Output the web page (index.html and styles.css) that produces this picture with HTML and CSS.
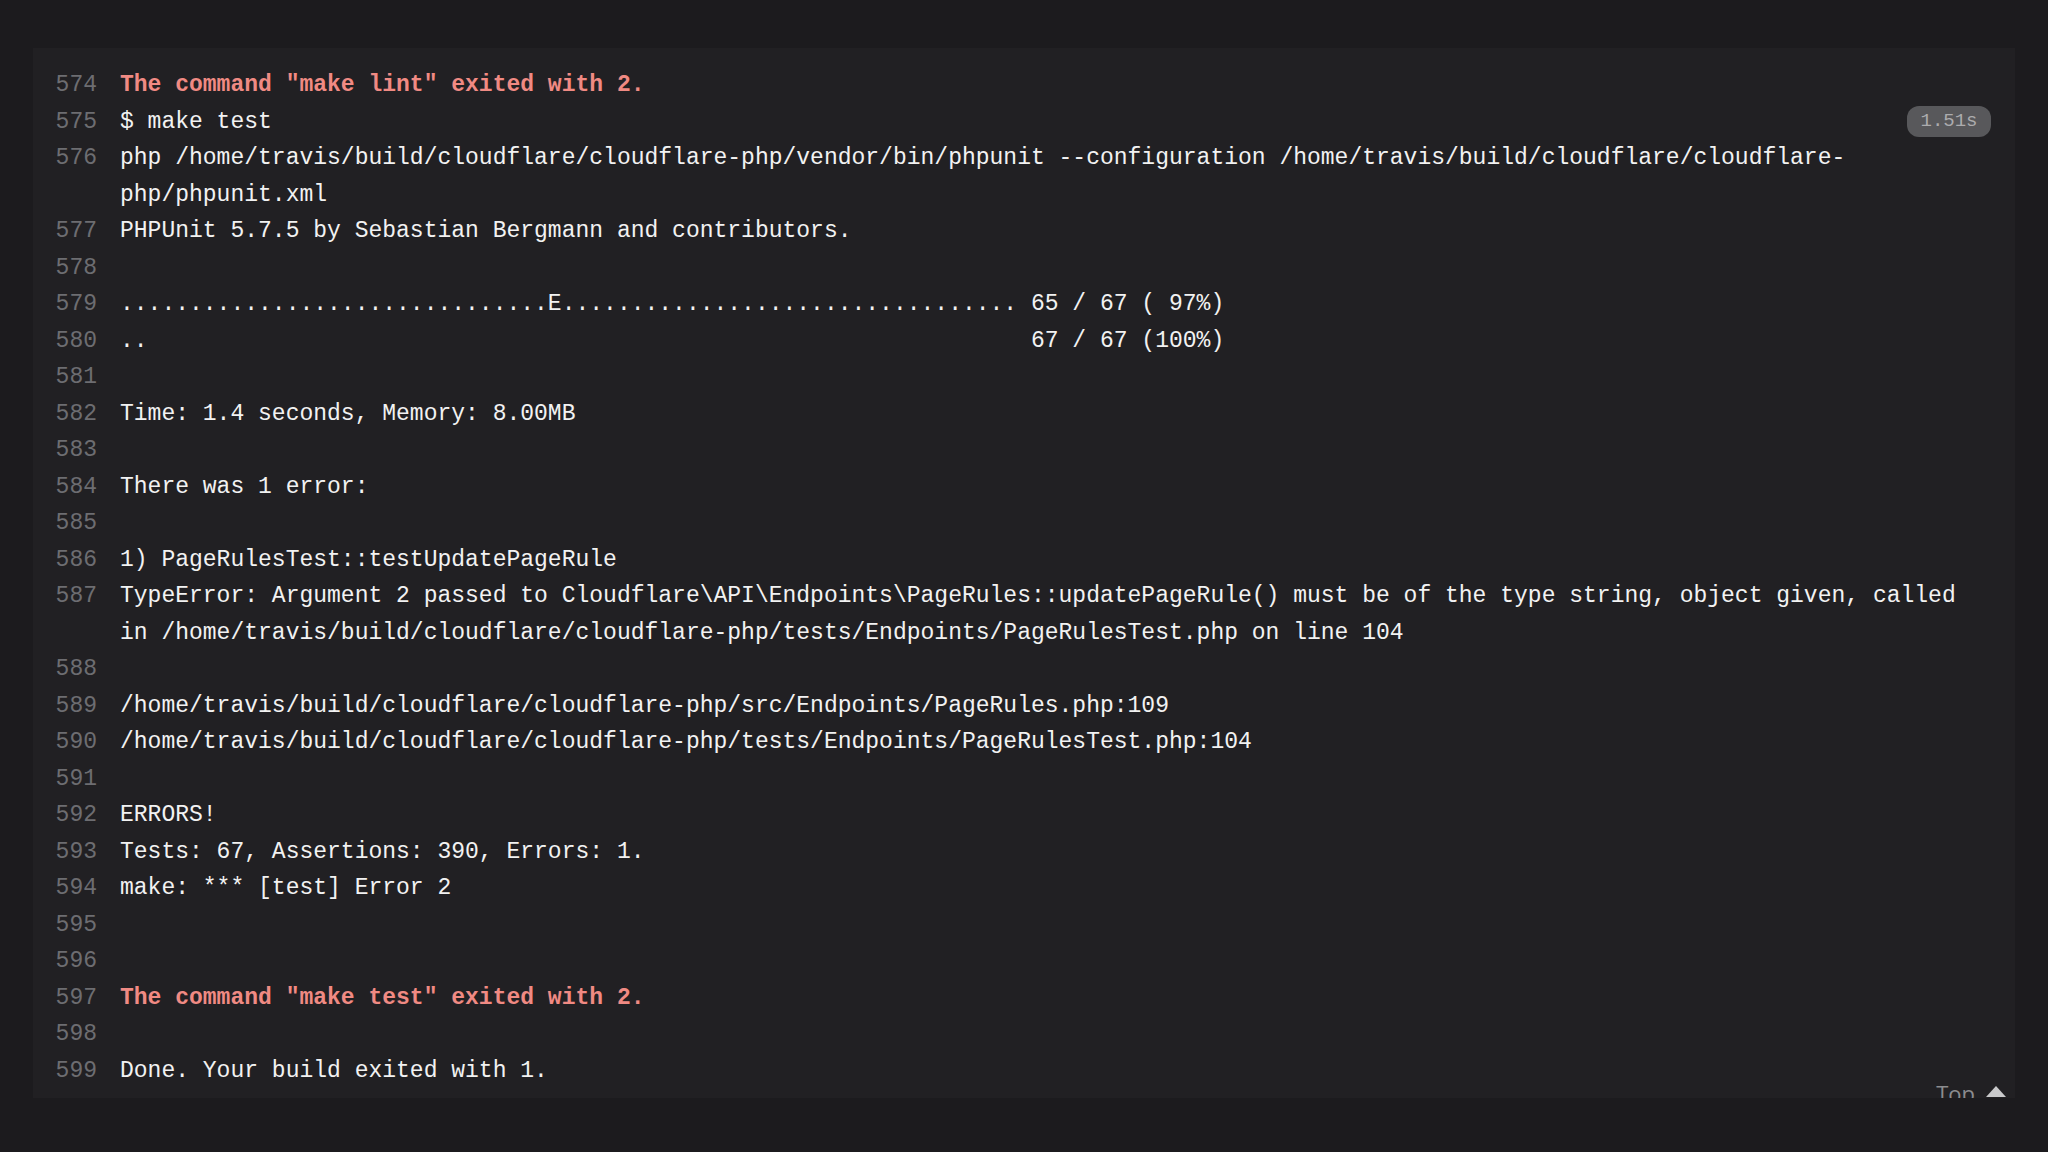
FILE: index.html
```html
<!DOCTYPE html>
<html>
<head>
<meta charset="utf-8">
<link rel="stylesheet" href="styles.css">
</head>
<body>
<div class="log">
  <span class="badge">1.51s</span>
  <div class="row err"><span class="num">574</span><span class="txt">The command "make lint" exited with 2.</span></div>
  <div class="row"><span class="num">575</span><span class="txt">$ make test</span></div>
  <div class="row"><span class="num">576</span><span class="txt">php /home/travis/build/cloudflare/cloudflare-php/vendor/bin/phpunit --configuration /home/travis/build/cloudflare/cloudflare-php/phpunit.xml</span></div>
  <div class="row"><span class="num">577</span><span class="txt">PHPUnit 5.7.5 by Sebastian Bergmann and contributors.</span></div>
  <div class="row"><span class="num">578</span><span class="txt"></span></div>
  <div class="row"><span class="num">579</span><span class="txt">...............................E................................. 65 / 67 ( 97%)</span></div>
  <div class="row"><span class="num">580</span><span class="txt">..                                                                67 / 67 (100%)</span></div>
  <div class="row"><span class="num">581</span><span class="txt"></span></div>
  <div class="row"><span class="num">582</span><span class="txt">Time: 1.4 seconds, Memory: 8.00MB</span></div>
  <div class="row"><span class="num">583</span><span class="txt"></span></div>
  <div class="row"><span class="num">584</span><span class="txt">There was 1 error:</span></div>
  <div class="row"><span class="num">585</span><span class="txt"></span></div>
  <div class="row"><span class="num">586</span><span class="txt">1) PageRulesTest::testUpdatePageRule</span></div>
  <div class="row"><span class="num">587</span><span class="txt">TypeError: Argument 2 passed to Cloudflare\API\Endpoints\PageRules::updatePageRule() must be of the type string, object given, called in /home/travis/build/cloudflare/cloudflare-php/tests/Endpoints/PageRulesTest.php on line 104</span></div>
  <div class="row"><span class="num">588</span><span class="txt"></span></div>
  <div class="row"><span class="num">589</span><span class="txt">/home/travis/build/cloudflare/cloudflare-php/src/Endpoints/PageRules.php:109</span></div>
  <div class="row"><span class="num">590</span><span class="txt">/home/travis/build/cloudflare/cloudflare-php/tests/Endpoints/PageRulesTest.php:104</span></div>
  <div class="row"><span class="num">591</span><span class="txt"></span></div>
  <div class="row"><span class="num">592</span><span class="txt">ERRORS!</span></div>
  <div class="row"><span class="num">593</span><span class="txt">Tests: 67, Assertions: 390, Errors: 1.</span></div>
  <div class="row"><span class="num">594</span><span class="txt">make: *** [test] Error 2</span></div>
  <div class="row"><span class="num">595</span><span class="txt"></span></div>
  <div class="row"><span class="num">596</span><span class="txt"></span></div>
  <div class="row err"><span class="num">597</span><span class="txt">The command "make test" exited with 2.</span></div>
  <div class="row"><span class="num">598</span><span class="txt"></span></div>
  <div class="row"><span class="num">599</span><span class="txt">Done. Your build exited with 1.</span></div>
  <a class="top-link">Top <svg class="tri" width="20" height="11" viewBox="0 0 20 11"><path d="M10 0 L20 11 L0 11 Z" fill="#c9c9cb"/></svg></a>
</div>
</body>
</html>
```

FILE: styles.css
```css
html, body {
  margin: 0;
  padding: 0;
  background: #1c1b1e;
}

body {
  padding: 48px 33px 54px 33px;
  height: 1152px;
  box-sizing: border-box;
}

.log {
  position: relative;
  height: 1050px;
  overflow: hidden;
  background: #212023;
  padding-top: 19px;
  box-sizing: border-box;
  font-family: "Liberation Mono", monospace;
  font-size: 23px;
  line-height: 36.5px;
  color: #f2f2f2;
}

.row {
  display: grid;
  grid-template-columns: 64px 1850px;
  column-gap: 23px;
  min-height: 36.5px;
}

.num {
  text-align: right;
  color: #6d6d71;
}

.txt {
  white-space: pre-wrap;
  word-break: normal;
}

.err .txt {
  color: #f08a83;
  font-weight: bold;
}

.badge {
  position: absolute;
  top: 58px;
  right: 24px;
  width: 84px;
  height: 31px;
  border-radius: 12px;
  background: #58585b;
  color: #acacae;
  font-size: 19px;
  line-height: 31px;
  text-align: center;
}

.top-link {
  position: absolute;
  right: 9px;
  bottom: -8px;
  display: flex;
  align-items: center;
  gap: 11px;
  font-family: "Open Sans", "Liberation Sans", sans-serif;
  font-size: 22px;
  line-height: 26px;
  color: #8c8c8f;
}

.tri {
  display: block;
  margin-top: -4px;
}
```
